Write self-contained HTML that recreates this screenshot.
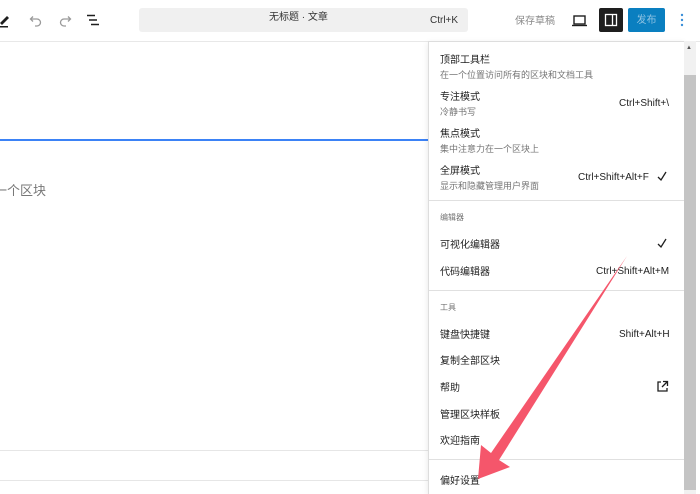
<!DOCTYPE html>
<html><head><meta charset="utf-8"><style>
*{margin:0;padding:0;box-sizing:border-box}
body{width:700px;height:494px;overflow:hidden;background:#fff;position:relative;font-family:"Liberation Sans","Noto Sans CJK SC",sans-serif;color:#1e1e1e}
.a{position:absolute;line-height:1.2}
.t{font-size:10px;color:#1e1e1e}
.s{font-size:9px;color:#757575}
</style></head><body>
<div class="a" style="left:0;top:0;width:700px;height:42px;background:#fff;border-bottom:1px solid #e8e8e8"></div>
<svg class="a" style="left:0;top:10px" width="110" height="20" viewBox="0 0 110 20">
<path d="M0 13 L7 6 L9 8 L2 15 Z" fill="#1e1e1e"/><rect x="0" y="16" width="8" height="1.5" fill="#1e1e1e"/>
<path d="M31 9 h6 a3.5 3.5 0 0 1 0 7 h-2 M33 6.5 L30.5 9 L33 11.5" stroke="#9a9a9a" stroke-width="1.3" fill="none"/>
<path d="M70 9 h-6 a3.5 3.5 0 0 0 0 7 h2 M68 6.5 L70.5 9 L68 11.5" stroke="#9a9a9a" stroke-width="1.3" fill="none"/>
<path d="M87 5.5h8 M89 10h8 M91 14.5h8" stroke="#1e1e1e" stroke-width="1.4"/>
</svg>
<div class="a" style="left:139px;top:8px;width:329px;height:24px;background:#f0f0f0;border-radius:3px"></div>
<div class="a" style="left:269px;top:12px;font-size:10px;color:#333">无标题 · 文章</div>
<div class="a" style="left:430px;top:15px;font-size:10px;color:#333">Ctrl+K</div>
<div class="a" style="left:515px;top:16px;font-size:10px;color:#8a8a8a">保存草稿</div>
<svg class="a" style="left:572px;top:14px" width="16" height="14"><rect x="2" y="2" width="11" height="8" fill="none" stroke="#1e1e1e" stroke-width="1.4"/><path d="M0 11.5h15" stroke="#1e1e1e" stroke-width="1.4"/></svg>
<div class="a" style="left:599px;top:8px;width:24px;height:24px;background:#1e1e1e;border-radius:2px"></div>
<svg class="a" style="left:603px;top:12px" width="16" height="16"><rect x="2.5" y="2.5" width="11" height="11" fill="none" stroke="#fff" stroke-width="1.3"/><path d="M9.5 2.5v11" stroke="#fff" stroke-width="1.3"/></svg>
<div class="a" style="left:628px;top:8px;width:37px;height:24px;background:#0a7fc0;border-radius:2px;color:#8fc3e3;font-size:10px;text-align:center;padding-top:7px">发布</div>
<svg class="a" style="left:679px;top:12px" width="6" height="16"><circle cx="3" cy="3" r="1.2" fill="#3a8ed8"/><circle cx="3" cy="8" r="1.2" fill="#3a8ed8"/><circle cx="3" cy="13" r="1.2" fill="#3a8ed8"/></svg>
<div class="a" style="left:0;top:139px;width:428px;height:2px;background:#3b82f6"></div>
<div class="a" style="left:-6px;top:183px;font-size:13px;color:#777">一个区块</div>
<div class="a" style="left:0;top:450px;width:428px;height:1px;background:#e6e6e6"></div>
<div class="a" style="left:0;top:480px;width:428px;height:1px;background:#e6e6e6"></div>
<div class="a" style="left:428px;top:41px;width:256px;height:453px;background:#fff;border-left:1px solid #ddd;border-top:1px solid #ddd;box-shadow:0 2px 6px rgba(0,0,0,.1)"></div>
<div class="a" style="left:684px;top:41px;width:12px;height:453px;background:#f1f1f1"></div>
<div class="a" style="left:684px;top:75px;width:12px;height:415px;background:#c4c4c4"></div>
<div class="a" style="left:686px;top:45px;font-size:6px;color:#555">▲</div>
<div class="a t" style="left:440px;top:55px">顶部工具栏</div>
<div class="a s" style="left:440px;top:70px">在一个位置访问所有的区块和文档工具</div>
<div class="a t" style="left:440px;top:92px">专注模式</div>
<div class="a s" style="left:440px;top:107px">冷静书写</div>
<div class="a t" style="left:619px;top:98px">Ctrl+Shift+\</div>
<div class="a t" style="left:440px;top:129px">焦点模式</div>
<div class="a s" style="left:440px;top:144px">集中注意力在一个区块上</div>
<div class="a t" style="left:440px;top:166px">全屏模式</div>
<div class="a s" style="left:440px;top:181px">显示和隐藏管理用户界面</div>
<div class="a t" style="left:578px;top:172px">Ctrl+Shift+Alt+F</div>
<svg class="a" style="left:656px;top:170px" width="12" height="12"><path d="M2 7 L5 10 L10 2" stroke="#1e1e1e" stroke-width="1.3" fill="none"/></svg>
<div class="a" style="left:429px;top:200px;width:255px;height:1px;background:#e0e0e0"></div>
<div class="a s" style="left:440px;top:213px;font-size:8px">编辑器</div>
<div class="a t" style="left:440px;top:240px">可视化编辑器</div>
<svg class="a" style="left:656px;top:237px" width="12" height="12"><path d="M2 7 L5 10 L10 2" stroke="#1e1e1e" stroke-width="1.3" fill="none"/></svg>
<div class="a t" style="left:440px;top:267px">代码编辑器</div>
<div class="a t" style="left:596px;top:266px">Ctrl+Shift+Alt+M</div>
<div class="a" style="left:429px;top:290px;width:255px;height:1px;background:#e0e0e0"></div>
<div class="a s" style="left:440px;top:303px;font-size:8px">工具</div>
<div class="a t" style="left:440px;top:330px">键盘快捷键</div>
<div class="a t" style="left:619px;top:329px">Shift+Alt+H</div>
<div class="a t" style="left:440px;top:356px">复制全部区块</div>
<div class="a t" style="left:440px;top:383px">帮助</div>
<svg class="a" style="left:656px;top:380px" width="13" height="13"><path d="M5 2H2v9h9V8 M7 1.5h4.5V6 M11.5 1.5L6 7" stroke="#1e1e1e" stroke-width="1.3" fill="none"/></svg>
<div class="a t" style="left:440px;top:410px">管理区块样板</div>
<div class="a t" style="left:440px;top:436px">欢迎指南</div>
<div class="a" style="left:429px;top:459px;width:255px;height:1px;background:#e0e0e0"></div>
<div class="a t" style="left:440px;top:476px">偏好设置</div>
<svg class="a" style="left:0;top:0" width="700" height="494"><path d="M627 256 L499 460 L510 467 L478 479 L481 445 L491 453 Z" fill="#f5566b"/></svg>
</body></html>
